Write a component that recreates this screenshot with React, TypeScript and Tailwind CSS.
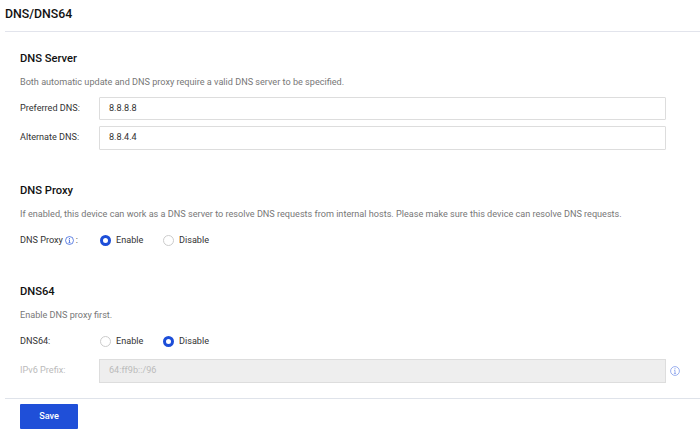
const Info = ({ className }: { className: string }) => (
  <svg viewBox="0 0 12 12" className={className} fill="none" stroke="currentColor">
    <circle cx="6" cy="6" r="5.3" strokeWidth="0.9" />
    <path d="M6 5.2V8.9M4.7 8.9H7.3M4.9 5.2H6" strokeWidth="0.9" />
    <path d="M6 2.7V3.9" strokeWidth="1.1" />
  </svg>
);

const Radio = ({ on, label, className }: { on?: boolean; label: string; className: string }) => (
  <div className={`flex items-center gap-[5px] ${className}`}>
    {on ? (
      <span className="mb-[2px] box-border size-[11px] rounded-full border-[3px] border-[#1d4ed8] bg-white" />
    ) : (
      <span className="mb-[2px] box-border size-[11px] rounded-full border border-[#cccccc] bg-white" />
    )}
    <span className="text-[#333333]">{label}</span>
  </div>
);

const Section = ({ title, desc, children, className }: { title: string; desc: string; children: React.ReactNode; className: string }) => (
  <section className={className}>
    <h2 className="h-[14px] text-[11.2px] leading-[14px] font-medium text-[#111111]">{title}</h2>
    <p className="mt-[10px] h-[12px] leading-[12px] text-[#777777]">{desc}</p>
    {children}
  </section>
);

const Field = ({ label, value, className }: { label: string; value: string; className: string }) => (
  <div className={`flex items-center ${className}`}>
    <span className="w-[79px] text-[#333333]">{label}</span>
    <div className="flex h-full w-[567px] items-center rounded-[1px] border border-[#dddddd] pl-[9px] text-[#333333]">{value}</div>
  </div>
);

export default function App() {
  return (
    <div className="relative h-[448px] w-[700px] overflow-hidden bg-white font-['Roboto',sans-serif] text-[9.12px]">
      <header className="ml-[5px] h-[32px] border-b border-[#e2e4ec] pt-[7px] text-[12.3px] leading-[14px] font-medium text-[#111111]">DNS/DNS64</header>
      <main className="px-[20px]">
        <Section className="pt-[20px]" title="DNS Server" desc="Both automatic update and DNS proxy require a valid DNS server to be specified.">
          <Field className="mt-[9px] h-[23px]" label="Preferred DNS:" value="8.8.8.8" />
          <Field className="mt-[6px] h-[24px]" label="Alternate DNS:" value="8.8.4.4" />
        </Section>
        <Section className="pt-[34px]" title="DNS Proxy" desc="If enabled, this device can work as a DNS server to resolve DNS requests from internal hosts. Please make sure this device can resolve DNS requests.">
          <div className="mt-[14px] flex h-[14px] items-center">
            <span className="flex w-[80px] items-center text-[#333333]">DNS Proxy<Info className="mb-[2px] ml-[2px] size-[9px] text-[#1d4ed8]" /><span className="ml-[2px]">:</span></span>
            <div className="flex"><Radio on label="Enable" className="w-[63px]" /><Radio label="Disable" className="w-[63px]" /></div>
          </div>
        </Section>
        <Section className="pt-[37px]" title="DNS64" desc="Enable DNS proxy first.">
          <div className="mt-[14px] flex h-[14px] items-center">
            <span className="w-[80px] text-[#333333]">DNS64:</span>
            <div className="flex"><Radio label="Enable" className="w-[63px]" /><Radio on label="Disable" className="w-[63px]" /></div>
          </div>
          <div className="mt-[10px] flex items-center">
            <span className="w-[79px] text-[#bbbbbb]">IPv6 Prefix:</span>
            <div className="flex h-[24px] w-[567px] items-center border border-[#dddddd] bg-[#eeeeee] pl-[9px] text-[#bbbbbb]">64:ff9b::/96</div>
            <Info className="ml-[4px] size-[10px] text-[#7b96ea]" />
          </div>
        </Section>
      </main>
      <footer className="ml-[5px] mt-[15px] border-t border-[#dfe3ea] pl-[15px] pt-[5px]">
        <button className="h-[25px] w-[58px] rounded-[1px] bg-[#1f4fd8] pt-[1px] font-medium text-white">Save</button>
      </footer>
    </div>
  );
}
